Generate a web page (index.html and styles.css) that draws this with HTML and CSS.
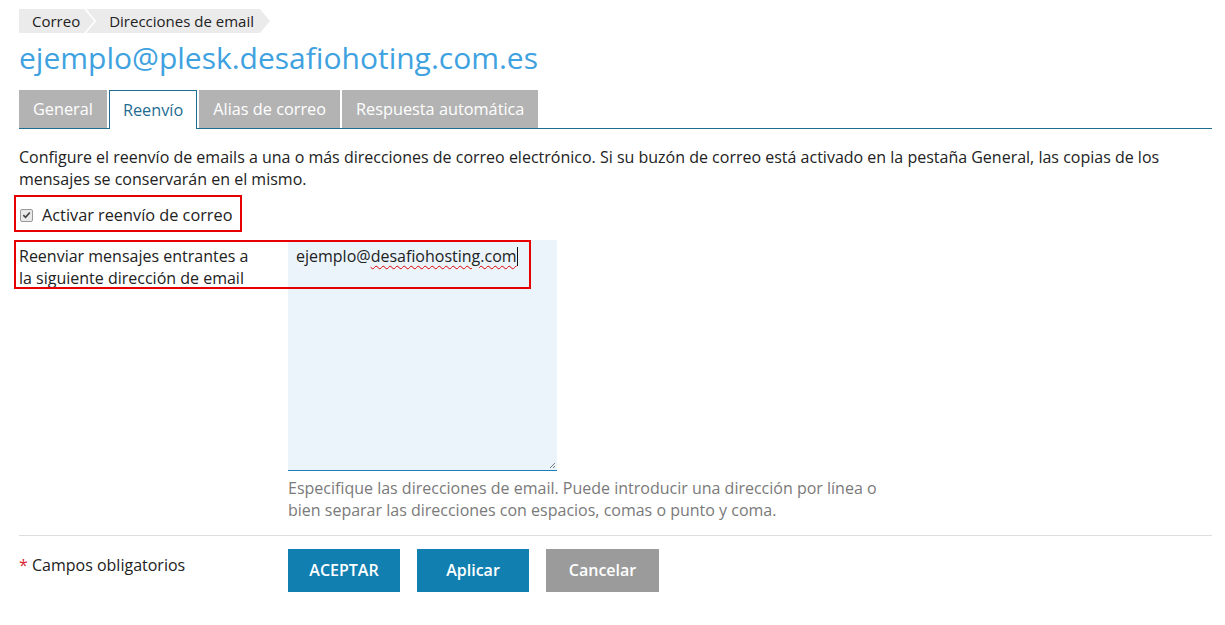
FILE: index.html
```html
<!DOCTYPE html>
<html lang="es">
<head>
<meta charset="utf-8">
<title>Reenvío</title>
<link rel="stylesheet" href="styles.css">
</head>
<body>
<div class="page">
  <nav class="crumbs">
    <span class="crumb first">Correo</span>
    <span class="crumb last">Direcciones de email</span>
  </nav>
  <h1 class="title">ejemplo@plesk.desafiohoting.com.es</h1>
  <div class="tabs">
    <span class="tab">General</span>
    <span class="tab active">Reenvío</span>
    <span class="tab">Alias de correo</span>
    <span class="tab">Respuesta automática</span>
  </div>
  <p class="intro">Configure el reenvío de emails a una o más direcciones de correo electrónico. Si su buzón de correo está activado en la pestaña General, las copias de los mensajes se conservarán en el mismo.</p>
  <div class="check-row">
    <label class="check"><span class="box"><svg viewBox="0 0 12 12" width="12" height="12"><path d="M2.5 6.2 L5 8.6 L9.6 3.2" fill="none" stroke="#444" stroke-width="1.8"/></svg></span>Activar reenvío de correo</label>
    <span class="mark mark-check"></span>
  </div>
  <div class="form-row">
    <div class="label">Reenviar mensajes entrantes a la siguiente dirección de email</div>
    <div class="field">
      <div class="textarea"><span class="plain">ejemplo@</span><span class="spell">desafiohosting.com</span><span class="caret"></span>
        <svg class="grip" viewBox="0 0 8 8" width="8" height="8"><path d="M7 2 L2 7 M7 5 L5 7" stroke="#777" stroke-width="1"/></svg>
      </div>
      <div class="hint">Especifique las direcciones de email. Puede introducir una dirección por línea o bien separar las direcciones con espacios, comas o punto y coma.</div>
    </div>
    <span class="mark mark-label"></span>
  </div>
  <div class="footer">
    <div class="req"><span class="star">*</span> Campos obligatorios</div>
    <div class="buttons">
      <span class="btn primary caps">ACEPTAR</span>
      <span class="btn primary">Aplicar</span>
      <span class="btn secondary">Cancelar</span>
    </div>
  </div>
</div>
</body>
</html>
```
FILE: styles.css
```css
* { box-sizing: border-box; }
body {
  margin: 0;
  background: #fff;
  font-family: "Open Sans", "DejaVu Sans", sans-serif;
  color: #222;
  font-size: 16px;
}
.page {
  padding: 9px 13px 0 19px;
}
.crumbs {
  display: flex;
  height: 24px;
  font-size: 15px;
  line-height: 24px;
}
.crumb {
  background: #ebebeb;
  color: #222;
  display: block;
}
.crumb.first {
  padding: 0 14px 0 13px;
  clip-path: polygon(0 0, calc(100% - 10px) 0, 100% 50%, calc(100% - 10px) 100%, 0 100%);
}
.crumb.last {
  margin-left: -8px;
  padding: 0 16px 0 23px;
  clip-path: polygon(0 0, calc(100% - 10px) 0, 100% 50%, calc(100% - 10px) 100%, 0 100%, 10px 50%);
}
.title {
  margin: 9px 0 0;
  font-weight: 400;
  font-size: 30px;
  line-height: 32px;
  color: #3fa2e0;
}
.tabs {
  display: flex;
  gap: 2px;
  margin-top: 16px;
  border-bottom: 1px solid #1f6d92;
  height: 39px;
  align-items: flex-end;
}
.tab {
  display: block;
  height: 38px;
  line-height: 38px;
  padding: 0 14px;
  background: #b3b3b3;
  color: #fff;
  font-size: 16.3px;
}
.tab.active {
  background: #fff;
  color: #1f6d92;
  border: 1px solid #1f6d92;
  border-bottom: none;
  height: 39px;
  margin-bottom: -1px;
  padding: 0 13px;
  line-height: 38px;
}
.intro {
  margin: 17px 0 0;
  line-height: 22px;
}
.check-row {
  position: relative;
  margin-top: 12px;
  height: 26px;
}
.check {
  display: flex;
  align-items: center;
  gap: 9px;
  padding-left: 1px;
  font-size: 16.3px;
  line-height: 26px;
}
.box {
  width: 13px;
  height: 13px;
  border: 1px solid #999;
  border-radius: 2px;
  background: #e9e9e9;
  display: flex;
  align-items: center;
  justify-content: center;
}
.mark {
  position: absolute;
  border: 2px solid #e60000;
}
.mark-check {
  left: -5px;
  top: -7px;
  width: 228px;
  height: 37px;
}
.form-row {
  position: relative;
  display: flex;
  margin-top: 12px;
}
.label {
  width: 269px;
  flex: none;
  padding-top: 5px;
  line-height: 22px;
  padding-right: 25px;
}
.field {
  width: 620px;
}
.textarea {
  position: relative;
  width: 269px;
  height: 231px;
  background: #ebf4fb;
  border-bottom: 1px solid #1c7fb5;
  padding: 5px 8px;
  line-height: 22px;
}
.spell {
  text-decoration: underline wavy #e00000;
  text-decoration-thickness: 1px;
  text-underline-offset: 3px;
}
.caret {
  display: inline-block;
  width: 1px;
  height: 19px;
  background: #111;
  vertical-align: -4px;
}
.grip {
  position: absolute;
  right: 1px;
  bottom: 1px;
}
.hint {
  margin-top: 6px;
  color: #7a7a7a;
  line-height: 22px;
}
.mark-label {
  left: -5px;
  top: 0;
  width: 517px;
  height: 49px;
}
.footer {
  margin-top: 14px;
  border-top: 1px solid #ddd;
  display: flex;
  padding-top: 13px;
}
.req {
  width: 269px;
  flex: none;
  padding-top: 5px;
  font-size: 16px;
}
.star { color: #d9262f; }
.buttons {
  display: flex;
  gap: 17px;
}
.btn {
  display: block;
  height: 43px;
  line-height: 43px;
  width: 112px;
  text-align: center;
  color: #fff;
  font-weight: 600;
  font-size: 16px;
}
.btn.primary { background: #1180b1; }
.btn.secondary { background: #9b9b9b; width: 113px; }
```
